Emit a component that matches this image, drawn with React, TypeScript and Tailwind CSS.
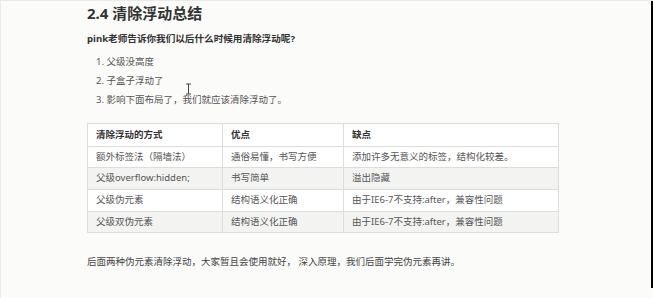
const rows = [
  ["额外标签法（隔墙法）", "通俗易懂，书写方便", "添加许多无意义的标签，结构化较差。"],
  ["父级overflow:hidden;", "书写简单", "溢出隐藏"],
  ["父级伪元素", "结构语义化正确", "由于IE6-7不支持:after，兼容性问题"],
  ["父级双伪元素", "结构语义化正确", "由于IE6-7不支持:after，兼容性问题"],
];

const heights = ["h-[21px]", "h-[22px]", "h-[22px]", "h-[21px]"];

export default function App() {
  return (
    <div
      className="w-[653px] h-[298px] bg-[#fbfcfa] flex border-t border-l border-[#e9ebe7] overflow-hidden text-[#333]"
      style={{ fontFamily: '"Noto Sans", "Noto Sans CJK SC", sans-serif' }}
    >
      <div className="flex-1 pl-[86px] pt-[2px] relative">
        <h2 className="text-[15px] font-bold leading-[20px] text-[#333]">2.4 清除浮动总结</h2>
        <p className="mt-[9px] text-[9.6px] font-bold leading-[14px] text-[#333]">
          pink老师告诉你我们以后什么时候用清除浮动呢?
        </p>
        <ol className="mt-[6px] pl-[9px] text-[9.5px] leading-[19px] text-[#555]">
          <li>1. 父级没高度</li>
          <li>2. 子盒子浮动了</li>
          <li>3. 影响下面布局了，我们就应该清除浮动了。</li>
        </ol>

        {/* text cursor */}
        <svg className="absolute left-[184px] top-[82px]" width="7" height="12" viewBox="0 0 7 12">
          <path d="M1 1h5M3.5 1v10M1 11h5" stroke="#444" strokeWidth="1" fill="none" />
        </svg>

        <div className="mt-[14px] w-[472px] border-t border-l border-[#dcdedc] text-[9.5px] text-[#555]">
          <div className="grid grid-cols-[135px_121px_215px] h-[23px] bg-white">
            {["清除浮动的方式", "优点", "缺点"].map((h) => (
              <div key={h} className="border-r border-b border-[#dcdedc] pl-[8px] flex items-center font-bold text-[#333]">
                {h}
              </div>
            ))}
          </div>
          {rows.map((r, i) => (
            <div
              key={i}
              className={`grid grid-cols-[135px_121px_215px] ${heights[i]} box-content ${i % 2 === 1 ? "bg-[#f3f4f2]" : "bg-white"}`}
            >
              {r.map((c, j) => (
                <div key={j} className="border-r border-b border-[#dcdedc] pl-[8px] flex items-center">
                  {c}
                </div>
              ))}
            </div>
          ))}
        </div>

        <p className="mt-[22px] text-[9.5px] leading-[14px] text-[#444]">
          后面两种伪元素清除浮动，大家暂且会使用就好， 深入原理，我们后面学完伪元素再讲。
        </p>
      </div>
      <div className="w-[2px] bg-black mb-[10px]" />
    </div>
  );
}
